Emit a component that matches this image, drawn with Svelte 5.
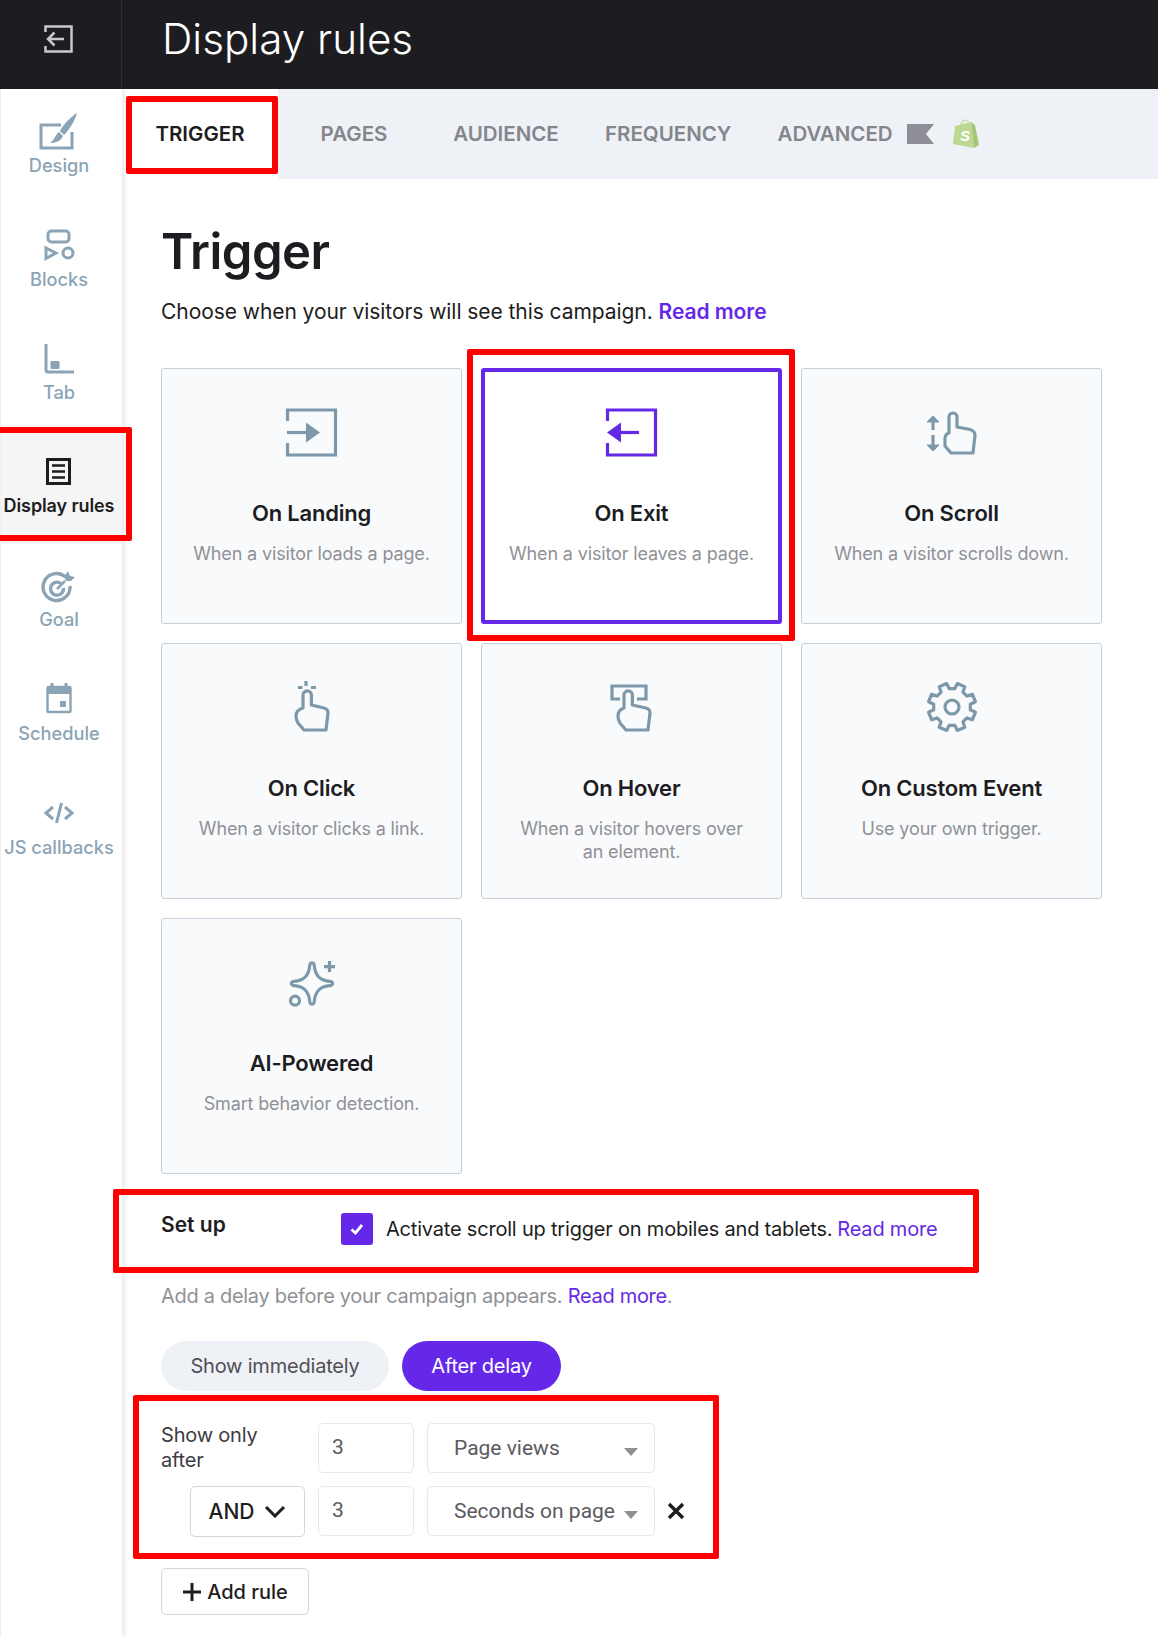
<script>
  const tabs = ['TRIGGER', 'PAGES', 'AUDIENCE', 'FREQUENCY', 'ADVANCED'];

  const navItems = [
    { key: 'design', label: 'Design' },
    { key: 'blocks', label: 'Blocks' },
    { key: 'tab', label: 'Tab' },
    { key: 'display', label: 'Display rules', active: true },
    { key: 'goal', label: 'Goal' },
    { key: 'schedule', label: 'Schedule' },
    { key: 'js', label: 'JS callbacks' }
  ];

  const cards = [
    { key: 'landing', title: 'On Landing', desc: 'When a visitor loads a page.' },
    { key: 'exit', title: 'On Exit', desc: 'When a visitor leaves a page.', active: true },
    { key: 'scroll', title: 'On Scroll', desc: 'When a visitor scrolls down.' },
    { key: 'click', title: 'On Click', desc: 'When a visitor clicks a link.' },
    { key: 'hover', title: 'On Hover', desc: 'When a visitor hovers over an element.' },
    { key: 'custom', title: 'On Custom Event', desc: 'Use your own trigger.' },
    { key: 'ai', title: 'AI-Powered', desc: 'Smart behavior detection.' }
  ];

  // 8 tooth gear outline around the middle of the 56 box
  function gearPoints() {
    const pts = [];
    for (let i = 0; i < 8; i++) {
      const a = (i * Math.PI) / 4 + Math.PI / 8;
      for (const [off, r] of [[-0.24, 18.5], [-0.17, 24], [0.17, 24], [0.24, 18.5]]) {
        pts.push(`${(28 + r * Math.cos(a + off)).toFixed(1)},${(29 + r * Math.sin(a + off)).toFixed(1)}`);
      }
    }
    return pts.join(' ');
  }
</script>

{#snippet cardIcon(key)}
  <svg class="card-icon" width="56" height="56" viewBox="0 0 56 56" fill="none" stroke="currentColor" stroke-width="3.200">
    {#if key === 'landing'}
      <path d="M3.500 18V7H51.500V52H3.500V40" />
      <path d="M3 29.500H23" />
      <path d="M22 19.500L36 29.500L22 39.500Z" fill="currentColor" stroke="none" />
    {:else if key === 'exit'}
      <path d="M3.500 18V7H51.500V52H3.500V40" />
      <path d="M16 29.500H35" />
      <path d="M17 19.500L3 29.500L17 39.500Z" fill="currentColor" stroke="none" />
    {:else if key === 'scroll'}
      <path d="M9 16V27M9 32V45" />
      <path d="M3 19L9 13L15 19Z" fill="currentColor" stroke-width="1" />
      <path d="M3 42L9 48L15 42Z" fill="currentColor" stroke-width="1" />
      <path d="M25 30V14a4 4 0 0 1 8 0V24L46 26.500Q51 28 51 32L49 50H27L21 43V36Q21 31 25 30Z" stroke-linejoin="round" />
    {:else if key === 'click'}
      <path d="M22 3V8M14 9.500H18.500M27 9.500H32" />
      <path d="M19 30V17a4.200 4.200 0 0 1 8.400 0V27L40 30Q44 31 44 35L42 52H20L14 45Q12 42 12 38Q12 32 19 30Z" stroke-linejoin="round" />
    {:else if key === 'hover'}
      <path d="M16 21H8V8H42V21H33" />
      <path d="M20 30V17a4.200 4.200 0 0 1 8.400 0V27L42 30Q46 31 46 35L44 52H22L16 45Q14 42 14 38Q14 32 20 30Z" stroke-linejoin="round" />
    {:else if key === 'custom'}
      <polygon points={gearPoints()} stroke-linejoin="round" />
      <circle cx="28" cy="29" r="7" />
    {:else if key === 'ai'}
      <path d="M25.800 12C26.500 9 29.500 9 30.200 12C31 22 35 27.500 46 28.300C49.500 29 49.500 32 46 32.700C35 33.500 31 39 30.200 49C29.500 52 26.500 52 25.800 49C25 39 21 33.500 10 32.700C6.500 32 6.500 29 10 28.300C21 27.500 25 22 25.800 12Z" />
      <path d="M45.500 8V19M40 13.700H51" />
      <circle cx="11" cy="47.700" r="4.500" />
    {/if}
  </svg>
{/snippet}

{#snippet navIcon(key)}
  <svg class="nav-icon" width="44" height="44" viewBox="0 0 44 44" fill="none" stroke="currentColor" stroke-width="3">
    {#if key === 'design'}
      <path d="M25 15H5V38H36V22" />
      <path d="M41 3C36 6 28 13 24 21L28 25C33 20 39 11 41 3Z" fill="currentColor" stroke="none" />
      <path d="M23 22L27 26C25 31 20 33 14 33C18 31 19 25 23 22Z" fill="currentColor" stroke="none" />
    {:else if key === 'blocks'}
      <rect x="12" y="8" width="21" height="11" rx="3.500" />
      <path d="M10 25L20 30L10 35.500Z" />
      <circle cx="32" cy="30" r="5" />
    {:else if key === 'tab'}
      <path d="M10 7V33Q10 35 12 35H38" />
      <rect x="14.500" y="24" width="9" height="8" rx="1" fill="currentColor" stroke="none" />
    {:else if key === 'display'}
      <rect x="11.500" y="9.500" width="22" height="24" />
      <path d="M16 15.500H29M16 21.500H29M16 27.500H29" stroke-width="2.500" />
    {:else if key === 'goal'}
      <path d="M29 12.500A13.500 13.500 0 1 0 34 22" stroke-width="3.400" />
      <path d="M25 19.500A6.500 6.500 0 1 0 27.500 24" stroke-width="3.400" />
      <path d="M21 25L29 17" stroke-width="2.500" />
      <path d="M32 7L34 12L39 13L35 17L30 17L28 13Z" fill="currentColor" stroke="none" />
    {:else if key === 'schedule'}
      <rect x="11.500" y="10" width="23" height="25" rx="1" stroke-width="2.400" />
      <rect x="11" y="9" width="24" height="8" fill="currentColor" stroke="none" />
      <path d="M16 6V10M30 6V10" />
      <rect x="24" y="24" width="6" height="6" fill="currentColor" stroke="none" />
    {:else if key === 'js'}
      <path d="M17 16L10 22L17 28M29 16L36 22L29 28M25.500 12L20.500 32" stroke-width="3" />
    {/if}
  </svg>
{/snippet}

<div class="page">
  <header class="topbar">
    <div class="back">
      <svg width="32" height="32" viewBox="0 0 32 32" fill="none" stroke="#c9c9cb" stroke-width="2.500">
        <path d="M3.500 9V3.500H29.500V28.500H3.500V23" />
        <path d="M22 16H6M12.500 9.500L6 16L12.500 22.500" />
      </svg>
    </div>
    <h1>Display rules</h1>
  </header>

  <div class="body">
    <nav class="sidebar">
      {#each navItems as item}
        <div class="nav-item" class:active={item.active}>
          {@render navIcon(item.key)}
          <span>{item.label}</span>
        </div>
      {/each}
    </nav>

    <main class="main">
      <div class="tabs">
        {#each tabs as tab, i}
          <div class="tab" class:active={i === 0}>{tab}</div>
        {/each}
        <svg class="flag" width="27" height="20" viewBox="0 0 27 20"><path d="M0 0H27L19 10L27 20H0Z" fill="#8e8f96" /></svg>
        <svg class="shopify" width="27" height="30" viewBox="0 0 27 30">
          <path d="M2 7L18 3L21 29L0 25Z" fill="#bcd893" />
          <path d="M18 3L22 6L26 26L21 29Z" fill="#a5c674" />
          <path d="M8 7C8 3 11 1 13 1C15 1 16 4 16 6" fill="none" stroke="#bcd893" stroke-width="1.200" />
          <text x="7" y="22" class="shopify-s">S</text>
        </svg>
      </div>

      <div class="content">
        <h2>Trigger</h2>
        <p class="lead">Choose when your visitors will see this campaign. <a href="#top">Read more</a></p>

        <div class="cards">
          {#each cards as card}
            <div class="card" class:active={card.active}>
              {@render cardIcon(card.key)}
              <h3>{card.title}</h3>
              <p>{card.desc}</p>
            </div>
          {/each}
        </div>

        <div class="setup">
          <h4>Set up</h4>
          <span class="check">
            <svg width="16" height="14" viewBox="0 0 16 14" fill="none" stroke="#fff" stroke-width="2.800"><path d="M2.500 7.500L6.500 11L13 3" /></svg>
          </span>
          <span class="setup-text">Activate scroll up trigger on mobiles and tablets.</span>
          <a class="setup-link" href="#top">Read more</a>
        </div>

        <p class="delay">Add a delay before your campaign appears. <a href="#top">Read more</a>.</p>

        <div class="pills">
          <button class="pill">Show immediately</button>
          <button class="pill on">After delay</button>
        </div>

        <div class="rules">
          <div class="rule">
            <div class="rule-label">Show only after</div>
            <div class="field num">3</div>
            <div class="field select">Page views<i></i></div>
          </div>
          <div class="rule second">
            <div class="and">
              AND
              <svg width="22" height="13" viewBox="0 0 22 13" fill="none" stroke="#1d1d21" stroke-width="3"><path d="M2 2L11 11L20 2" /></svg>
            </div>
            <div class="field num">3</div>
            <div class="field select">Seconds on page<i></i></div>
            <svg class="remove" width="18" height="18" viewBox="0 0 18 18" fill="none" stroke="#1d1d21" stroke-width="3.400"><path d="M2 2L16 16M16 2L2 16" /></svg>
          </div>
        </div>

        <button class="add">
          <svg width="20" height="20" viewBox="0 0 20 20" fill="none" stroke="#1d1d21" stroke-width="3"><path d="M10 1V19M1 10H19" /></svg>
          Add rule
        </button>
      </div>
    </main>
  </div>

  <!-- red annotation frames drawn over the screenshot -->
  <div class="mark m-tab"></div>
  <div class="mark m-nav"></div>
  <div class="mark m-card"></div>
  <div class="mark m-setup"></div>
  <div class="mark m-rules"></div>
</div>

<style>
  :global(body) {
    margin: 0;
    background: #fff;
  }

  .page {
    position: relative;
    width: 1158px;
    height: 1636px;
    overflow: hidden;
    font-family: Inter, "Liberation Sans", sans-serif;
    color: #1d1d21;
  }

  .topbar {
    display: flex;
    align-items: center;
    height: 89px;
    background: #1d1d21;
  }
  .back {
    width: 122px;
    height: 100%;
    display: flex;
    align-items: center;
    padding-left: 42px;
    padding-bottom: 12px;
    box-sizing: border-box;
    border-right: 1px solid #2e2e33;
  }
  .topbar h1 {
    margin: -12px 0 0 40px;
    font-size: 42.200px;
    font-weight: 300;
    color: #fff;
  }

  .body {
    display: flex;
    height: 1547px;
  }

  .sidebar {
    width: 122px;
    flex-shrink: 0;
    padding-right: 5px;
    padding-top: 0.500px;
    border-left: 1px solid #eee;
    box-sizing: border-box;
    box-shadow: 3px 0 4px rgba(0, 0, 0, 0.08);
    position: relative;
    z-index: 1;
  }
  .nav-item {
    height: 113.600px;
    padding-top: 20px;
    box-sizing: border-box;
    display: flex;
    flex-direction: column;
    align-items: center;
    color: #8aa4b5;
    font-size: 18.200px;
    font-weight: 500;
    line-height: 24px;
    white-space: nowrap;
  }
  .nav-item span {
    margin-top: -0.500px;
  }
  .nav-icon {
    display: block;
    margin-left: -2px;
  }
  .nav-item.active {
    color: #1d1d21;
    font-weight: 600;
    background: #f5f5f5;
    margin-right: -5px;
    padding-right: 5px;
    font-size: 18px;
    letter-spacing: -0.100px;
  }

  .main {
    flex: 1;
    min-width: 0;
  }

  .tabs {
    display: flex;
    align-items: center;
    height: 90px;
    background: #eef1f6;
  }
  .tab {
    min-width: 152px;
    padding: 0 23px;
    box-sizing: border-box;
    line-height: 90px;
    text-align: center;
    font-size: 20.500px;
    font-weight: 600;
    color: #84868c;
  }
  .tab.active {
    min-width: 156px;
    background: #fff;
    color: #1d1d21;
  }
  .flag {
    margin-left: -9px;
  }
  .shopify {
    margin-left: 19px;
  }
  .shopify-s {
    font: italic 700 15px "Liberation Sans", sans-serif;
    fill: #fff;
  }

  .content {
    padding: 0 0 0 39px;
  }
  h2 {
    margin: 39px 0 0;
    font-size: 49px;
    line-height: 68px;
    font-weight: 600;
    letter-spacing: -0.500px;
  }
  .lead {
    margin: 11px 0 0;
    font-size: 21px;
    line-height: 30px;
    letter-spacing: -0.060px;
  }
  a {
    color: #6528e8;
    text-decoration: none;
  }
  .lead a {
    font-weight: 600;
  }

  .cards {
    display: grid;
    grid-template-columns: repeat(3, 301px);
    grid-auto-rows: 256px;
    gap: 19px;
    margin-top: 41px;
  }
  .card {
    box-sizing: border-box;
    border: 1px solid #c6d0da;
    border-radius: 3px;
    background: #f9fafc;
    padding: 34px 30px 0;
    display: flex;
    flex-direction: column;
    align-items: center;
    text-align: center;
    color: #7c98a9;
  }
  .card.active {
    border: 4px solid #6528e8;
    background: #fff;
    color: #6528e8;
    padding: 31px 20px 0;
  }
  .card-icon {
    flex-shrink: 0;
  }
  .card h3 {
    margin: 39px 0 0;
    font-size: 22px;
    line-height: 30px;
    font-weight: 600;
    color: #1d1d21;
    letter-spacing: -0.200px;
  }
  .card p {
    margin: 14px 0 0;
    font-size: 18px;
    line-height: 23px;
    color: #8f9196;
    letter-spacing: -0.150px;
  }

  .setup {
    display: flex;
    align-items: center;
    margin-top: 38px;
    height: 34px;
  }
  .setup h4 {
    margin: -10px 0 0;
    width: 180px;
    font-size: 21px;
    font-weight: 600;
  }
  .check {
    width: 32px;
    height: 32px;
    border-radius: 3px;
    background: #6528e8;
    display: flex;
    align-items: center;
    justify-content: center;
    margin-right: 13px;
  }
  .setup-text {
    font-size: 20px;
    letter-spacing: -0.200px;
  }
  .setup-link {
    margin-left: 5px;
    font-size: 20px;
    letter-spacing: -0.200px;
  }

  .delay {
    margin: 35px 0 0;
    font-size: 20px;
    line-height: 30px;
    letter-spacing: -0.300px;
    color: #8f9196;
  }

  .pills {
    display: flex;
    gap: 13px;
    margin-top: 30px;
  }
  .pill {
    height: 50px;
    width: 228px;
    border: 0;
    border-radius: 25px;
    background: #eef1f6;
    font: inherit;
    font-size: 20px;
    letter-spacing: -0.200px;
    color: #4f4f55;
    padding: 0;
  }
  .pill.on {
    width: 159px;
    background: #6528e8;
    color: #fff;
  }

  .rules {
    margin-top: 32px;
  }
  .rule {
    display: flex;
    align-items: center;
    height: 50px;
  }
  .rule.second {
    margin-top: 13px;
    padding-left: 29px;
  }
  .rule-label {
    width: 125px;
    margin-right: 32px;
    font-size: 20px;
    line-height: 25px;
    color: #3c3c42;
    letter-spacing: -0.200px;
  }
  .and {
    width: 115px;
    height: 51px;
    margin-right: 13px;
    box-sizing: border-box;
    border: 1px solid #d2d6de;
    border-radius: 5px;
    display: flex;
    align-items: center;
    justify-content: center;
    gap: 10px;
    font-size: 21px;
    font-weight: 500;
  }
  .field {
    height: 50px;
    box-sizing: border-box;
    border: 1px solid #e6e8ec;
    border-radius: 5px;
    display: flex;
    align-items: center;
    font-family: Roboto, "Liberation Sans", sans-serif;
    font-size: 21px;
    color: #5a5a60;
    position: relative;
  }
  .num {
    width: 96px;
    padding-left: 13px;
    padding-bottom: 2px;
    margin-right: 13px;
  }
  .select {
    width: 228px;
    padding-left: 26px;
  }
  .select i {
    position: absolute;
    right: 16px;
    top: 24px;
    border: 7.500px solid transparent;
    border-bottom: 0;
    border-top: 8px solid #8f8f8f;
  }
  .remove {
    margin-left: 12px;
  }

  .add {
    margin-top: 32px;
    width: 148px;
    height: 47px;
    background: #fff;
    border: 1px solid #d2d6de;
    border-radius: 5px;
    display: flex;
    align-items: center;
    justify-content: center;
    gap: 5px;
    font: inherit;
    font-size: 20px;
    font-weight: 500;
    color: #1d1d21;
    padding: 0;
  }

  .mark {
    position: absolute;
    box-sizing: border-box;
    border: 6px solid #ff0000;
    border-radius: 2px;
    z-index: 2;
  }
  .m-tab { left: 126px; top: 96px; width: 152px; height: 78px; }
  .m-nav { left: -6px; top: 427px; width: 138px; height: 114px; }
  .m-card { left: 467px; top: 349px; width: 328px; height: 292px; }
  .m-setup { left: 113px; top: 1189px; width: 866px; height: 84px; }
  .m-rules { left: 133px; top: 1395px; width: 586px; height: 164px; }
</style>
